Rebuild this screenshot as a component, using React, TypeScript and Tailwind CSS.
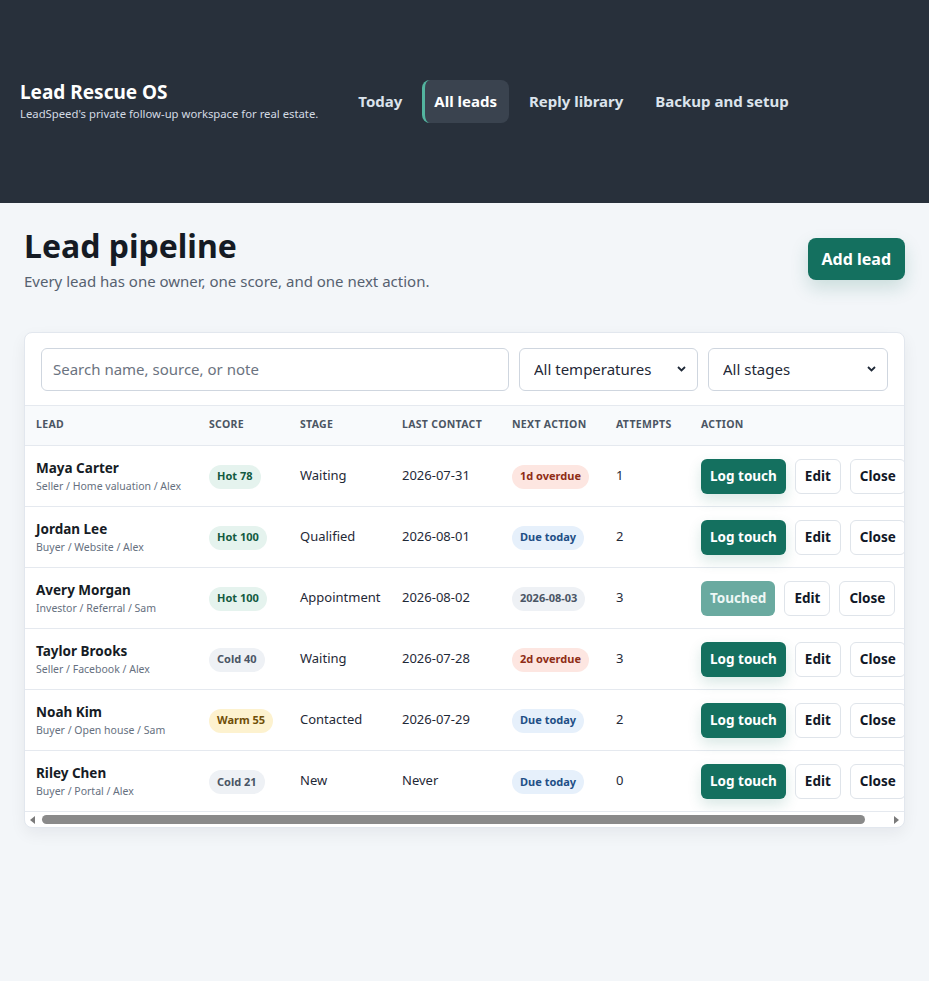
import React from 'react'

type Tone = 'hot' | 'cold' | 'warm' | 'late' | 'today' | 'date'

type Lead = {
  name: string
  meta: string
  score: string
  scoreTone: Tone
  stage: string
  last: string
  next: string
  nextTone: Tone
  attempts: number
  touched?: boolean
}

const leads: Lead[] = [
  { name: 'Maya Carter', meta: 'Seller / Home valuation / Alex', score: 'Hot 78', scoreTone: 'hot', stage: 'Waiting', last: '2026-07-31', next: '1d overdue', nextTone: 'late', attempts: 1 },
  { name: 'Jordan Lee', meta: 'Buyer / Website / Alex', score: 'Hot 100', scoreTone: 'hot', stage: 'Qualified', last: '2026-08-01', next: 'Due today', nextTone: 'today', attempts: 2 },
  { name: 'Avery Morgan', meta: 'Investor / Referral / Sam', score: 'Hot 100', scoreTone: 'hot', stage: 'Appointment', last: '2026-08-02', next: '2026-08-03', nextTone: 'date', attempts: 3, touched: true },
  { name: 'Taylor Brooks', meta: 'Seller / Facebook / Alex', score: 'Cold 40', scoreTone: 'cold', stage: 'Waiting', last: '2026-07-28', next: '2d overdue', nextTone: 'late', attempts: 3 },
  { name: 'Noah Kim', meta: 'Buyer / Open house / Sam', score: 'Warm 55', scoreTone: 'warm', stage: 'Contacted', last: '2026-07-29', next: 'Due today', nextTone: 'today', attempts: 2 },
  { name: 'Riley Chen', meta: 'Buyer / Portal / Alex', score: 'Cold 21', scoreTone: 'cold', stage: 'New', last: 'Never', next: 'Due today', nextTone: 'today', attempts: 0 },
]

const toneClass: Record<Tone, string> = {
  hot: 'bg-[#e5f3ee] text-[#135a41]',
  cold: 'bg-[#eef1f5] text-[#4a5565]',
  warm: 'bg-[#fdf2cf] text-[#6f4e07]',
  late: 'bg-[#fde6e1] text-[#8f2d16]',
  today: 'bg-[#e6f0fb] text-[#1f4f86]',
  date: 'bg-[#eef1f5] text-[#4a5565]',
}

function Badge({ tone, children }: { tone: Tone; children: React.ReactNode }) {
  return (
    <span className={`inline-flex h-6 items-center rounded-full px-2 text-[11px] font-bold whitespace-nowrap ${toneClass[tone]}`}>
      {children}
    </span>
  )
}

function Chevron() {
  return (
    <svg className="pointer-events-none absolute right-3 top-1/2 -translate-y-1/2" width="9" height="6" viewBox="0 0 9 6">
      <path d="M1 1l3.5 3.5L8 1" fill="none" stroke="#1f2937" strokeWidth="1.8" />
    </svg>
  )
}

const nav = ['Today', 'All leads', 'Reply library', 'Backup and setup']

const btn = 'h-[35px] rounded-md px-[9px] text-[13.5px] font-bold'

export default function App() {
  return (
    <div className="min-h-[981px] bg-[#f3f6f9] font-['Noto_Sans',sans-serif] text-[#1f2937]">
      <header className="flex h-[203px] items-center gap-7 bg-[#28303b] px-5">
        <div>
          <div className="text-[19px] font-bold leading-6 text-white">Lead Rescue OS</div>
          <div className="mt-0.5 text-[11.3px] text-[#d3dae3]">LeadSpeed's private follow-up workspace for real estate.</div>
        </div>
        <nav className="flex items-center gap-2">
          {nav.map((item) => {
            const active = item === 'All leads'
            return (
              <span
                key={item}
                className={`flex h-[43px] items-center rounded-lg px-3 text-[15px] font-bold ${
                  active ? 'border-l-[3px] border-[#53b49f] bg-[#3a434f] pl-[9px] text-white' : 'text-[#dbe3ec]'
                }`}
              >
                {item}
              </span>
            )
          })}
        </nav>
      </header>

      <main className="px-6 pt-[23px] pb-10">
        <div className="flex items-center justify-between">
          <div>
            <h1 className="text-[32px] font-bold leading-10 text-[#151b24]">Lead pipeline</h1>
            <p className="mt-[4px] text-[15px] text-[#566170]">Every lead has one owner, one score, and one next action.</p>
          </div>
          <button className="h-[42px] rounded-lg bg-[#14705f] px-[14px] text-[16px] font-bold text-white shadow-[0_8px_18px_rgba(20,112,95,0.18)]">
            Add lead
          </button>
        </div>

        <section className="mt-[39px] overflow-hidden rounded-lg border border-[#e2e7ee] bg-white shadow-[0_6px_16px_rgba(15,23,42,0.06)]">
          <div className="flex gap-2.5 px-4 pt-[15px] pb-[14px]">
            <input
              className="h-[43px] min-w-0 flex-1 rounded-md border border-[#cfd6df] px-[11px] text-[15px] placeholder:text-[#6b7380] focus:outline-none"
              placeholder="Search name, source, or note"
            />
            <div className="relative w-[179px]">
              <select className="h-[43px] w-full appearance-none rounded-md border border-[#cfd6df] bg-white px-[14px] text-[15px] text-[#1f2937]">
                <option>All temperatures</option>
              </select>
              <Chevron />
            </div>
            <div className="relative w-[180px]">
              <select className="h-[43px] w-full appearance-none rounded-md border border-[#cfd6df] bg-white px-[14px] text-[15px] text-[#1f2937]">
                <option>All stages</option>
              </select>
              <Chevron />
            </div>
          </div>

          <div className="overflow-hidden">
            <table className="w-[911px] table-fixed border-collapse text-left">
              <thead>
                <tr className="h-10 border-y border-[#e5e9ef] bg-[#f8fafc] text-[10.5px] font-bold uppercase tracking-[0.03em] text-[#4b5563]">
                  <th className="w-[173px] px-[11px]">Lead</th>
                  <th className="w-[91px] px-[11px]">Score</th>
                  <th className="w-[102px] px-[11px]">Stage</th>
                  <th className="w-[110px] px-[11px]">Last contact</th>
                  <th className="w-[104px] px-[11px]">Next action</th>
                  <th className="w-[85px] px-[11px]">Attempts</th>
                  <th className="px-[11px]">Action</th>
                </tr>
              </thead>
              <tbody>
                {leads.map((lead, i) => (
                  <tr key={lead.name} className={`h-[61px] ${i > 0 ? 'border-t border-[#e5e9ef]' : ''}`}>
                    <td className="px-[11px]">
                      <div className="text-[13.5px] font-bold leading-[18px] text-[#161c25]">{lead.name}</div>
                      <div className="mt-[2px] text-[10.5px] leading-[14px] text-[#667080] whitespace-nowrap">{lead.meta}</div>
                    </td>
                    <td className="px-[11px]">
                      <Badge tone={lead.scoreTone}>{lead.score}</Badge>
                    </td>
                    <td className="px-[11px] text-[13px]">{lead.stage}</td>
                    <td className="px-[11px] text-[13px]">{lead.last}</td>
                    <td className="px-[11px]">
                      <Badge tone={lead.nextTone}>{lead.next}</Badge>
                    </td>
                    <td className="px-[11px] text-[13px]">{lead.attempts}</td>
                    <td className="px-[11px] pt-px">
                      <div className="flex gap-[9px] whitespace-nowrap">
                        {lead.touched ? (
                          <button className={`${btn} bg-[#6aaaa0] text-[#eef7f5]`}>Touched</button>
                        ) : (
                          <button className={`${btn} bg-[#14705f] text-white shadow-[0_6px_14px_rgba(20,112,95,0.16)]`}>
                            Log touch
                          </button>
                        )}
                        <button className={`${btn} border border-[#dfe4ea] bg-white text-[#111827]`}>Edit</button>
                        <button className={`${btn} border border-[#dfe4ea] bg-white text-[#111827]`}>Close</button>
                      </div>
                    </td>
                  </tr>
                ))}
              </tbody>
            </table>
          </div>

          <div className="flex h-4 items-center gap-[6px] border-t border-[#e5e9ef] px-[5px]">
            <svg width="6" height="8" viewBox="0 0 6 8">
              <path d="M5 0v8L0 4z" fill="#7a7a7a" />
            </svg>
            <div className="flex flex-1 pr-[22px]">
              <div className="h-[9px] w-full rounded-full bg-[#8a8a8a]" />
            </div>
            <svg width="6" height="8" viewBox="0 0 6 8">
              <path d="M1 0v8l5-4z" fill="#7a7a7a" />
            </svg>
          </div>
        </section>
      </main>
    </div>
  )
}
